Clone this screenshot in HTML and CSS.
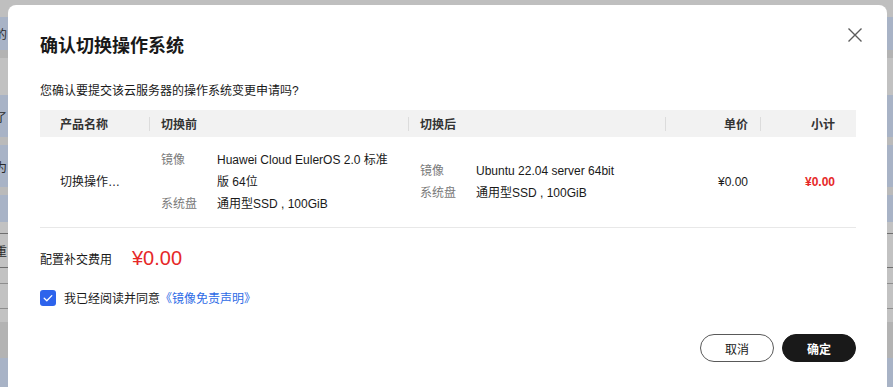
FILE: index.html
```html
<!DOCTYPE html>
<html lang="zh-CN">
<head>
<meta charset="utf-8">
<title>确认切换操作系统</title>
<link rel="stylesheet" href="styles.css">
</head>
<body>
<div class="page">
  <div class="bg r1"></div>
  <div class="bg r2 blue"><span class="bgtext">的</span></div>
  <div class="bg r3"></div>
  <div class="bg r4"></div>
  <div class="bg r5 blue"><span class="bgtext">了</span></div>
  <div class="bg r6"></div>
  <div class="bg r7 blue"><span class="bgtext">为</span></div>
  <div class="bg r8"></div>
  <div class="bg r9 blue"></div>
  <div class="bg r10"></div>
  <div class="bg r11"><span class="bgtext">重</span></div>
  <div class="bg r12"></div>
  <div class="bg r13"></div>
  <div class="bg r14"></div>
  <div class="bg r15"></div>
  <div class="bg r16 blue"></div>
</div>

<div class="dialog">
  <button class="close" aria-label="关闭">
    <svg width="16" height="16" viewBox="0 0 16 16"><path d="M1.5 1.5L14.5 14.5M14.5 1.5L1.5 14.5" stroke="#5c5c5c" stroke-width="1.4" fill="none"/></svg>
  </button>
  <h1 class="title">确认切换操作系统</h1>
  <p class="subtitle">您确认要提交该云服务器的操作系统变更申请吗?</p>

  <div class="table">
    <div class="thead">
      <div class="th c1">产品名称</div>
      <div class="th c2 sep">切换前</div>
      <div class="th c3 sep">切换后</div>
      <div class="th c4 sep right">单价</div>
      <div class="th c5 sep right">小计</div>
    </div>
    <div class="trow">
      <div class="td c1"><span class="ellipsis">切换操作系统</span></div>
      <div class="td c2">
        <dl class="spec">
          <dt>镜像</dt><dd>Huawei Cloud EulerOS 2.0 标准版 64位</dd>
          <dt>系统盘</dt><dd>通用型SSD , 100GiB</dd>
        </dl>
      </div>
      <div class="td c3">
        <dl class="spec">
          <dt>镜像</dt><dd>Ubuntu 22.04 server 64bit</dd>
          <dt>系统盘</dt><dd>通用型SSD , 100GiB</dd>
        </dl>
      </div>
      <div class="td c4 right">¥0.00</div>
      <div class="td c5 right price-red">¥0.00</div>
    </div>
  </div>

  <div class="fee">
    <span class="fee-label">配置补交费用</span>
    <span class="fee-value">¥0.00</span>
  </div>

  <label class="agree">
    <span class="checkbox">
      <svg width="16" height="16" viewBox="0 0 16 16"><rect width="16" height="16" rx="3" fill="#2d63ec"/><path d="M4.2 8.2L6.8 10.7L11.8 5.6" stroke="#fff" stroke-width="1.3" fill="none" stroke-linecap="round" stroke-linejoin="round"/></svg>
    </span>
    <span class="agree-text">我已经阅读并同意<a class="link" href="#">《镜像免责声明》</a></span>
  </label>

  <div class="actions">
    <button class="btn btn-ghost">取消</button>
    <button class="btn btn-primary">确定</button>
  </div>
</div>
</body>
</html>
```

FILE: styles.css
```css
* { box-sizing: border-box; }

html, body {
  margin: 0;
  padding: 0;
  width: 893px;
  height: 387px;
  overflow: hidden;
  background: #bdbdbd;
  font-family: "Liberation Sans", "Noto Sans CJK SC", sans-serif;
  color: #191919;
}

.page {
  display: flex;
  flex-direction: column;
}

.bg {
  background: #bfbfbf;
  font-size: 12px;
  color: #2a2a2a;
  display: flex;
  align-items: center;
  overflow: hidden;
}
.bg.blue { background: #a8b3c6; }
.bgtext { text-indent: -5px; display: block; }

.r1 { height: 17px; }
.r2 { height: 33px; }
.r3 { height: 8px; background: #b3b3b3; }
.r4 { height: 37px; background: #c1c1c1; }
.r5 { height: 42px; }
.r6 { height: 8px; background: #bababa; }
.r7 { height: 42px; }
.r8 { height: 8px; background: #bababa; }
.r9 { height: 27px; }
.r10 { height: 11px; background: #c2c2c2; }
.r11 { height: 35px; background: #c2c2c2; border-top: 1px solid #6f6f6f; border-bottom: 1px solid #6f6f6f; }
.r12 { height: 15px; background: #c2c2c2; }
.r13 { height: 26px; background: #c2c2c2; border-top: 1px solid #8e8e8e; border-bottom: 1px solid #8e8e8e; }
.r14 { height: 13px; background: #c2c2c2; }
.r15 { height: 36px; background: #b3b3b3; }
.r16 { height: 29px; }

.dialog {
  position: fixed;
  top: 5px;
  left: 8px;
  width: 879px;
  height: 382px;
  background: #fff;
  border-radius: 8px 8px 0 0;
  padding: 28px 31px 0 32px;
}

.close {
  position: absolute;
  top: 22px;
  right: 24px;
  width: 16px;
  height: 16px;
  padding: 0;
  border: 0;
  background: transparent;
  display: flex;
}

.title {
  margin: 0;
  font-size: 18px;
  line-height: 26px;
  font-weight: 700;
  color: #191919;
}

.subtitle {
  margin: 23px 0 0;
  font-size: 12px;
  line-height: 18px;
  color: #191919;
}

.table {
  margin-top: 10px;
  width: 816px;
  font-size: 12px;
}

.thead, .trow {
  display: grid;
  grid-template-columns: 109px 259px 257px 95px 96px;
}

.thead {
  background: #f2f2f2;
  height: 27px;
}

.th {
  display: flex;
  align-items: center;
  font-weight: 700;
  color: #333;
  padding: 0 12px;
  position: relative;
}
.th.sep::before {
  content: "";
  position: absolute;
  left: 0;
  top: 7px;
  height: 14px;
  width: 1px;
  background: #dcdcdc;
}
.th.c1 { padding-left: 20px; }

.right { justify-content: flex-end; text-align: right; }
.c5 { padding-right: 21px !important; }

.trow {
  height: 91px;
  border-bottom: 1px solid #e8e8e8;
  align-items: center;
}

.td {
  padding: 0 12px;
  display: flex;
  align-items: center;
  line-height: 22px;
}
.td.c1 { padding-left: 20px; }

.ellipsis {
  display: block;
  max-width: 64px;
  white-space: nowrap;
  overflow: hidden;
  text-overflow: ellipsis;
}

.spec {
  margin: 0;
  display: grid;
  grid-template-columns: 56px 1fr;
  width: 100%;
}
.spec dt { color: #7a7a7a; }
.spec dd { margin: 0; color: #191919; }

.price-red {
  color: #e62828;
  font-weight: 700;
}

.fee {
  margin-top: 16px;
  display: flex;
  align-items: center;
  height: 28px;
}
.fee-label {
  font-size: 12px;
  width: 92px;
}
.fee-value {
  font-size: 20px;
  color: #e62828;
}

.agree {
  margin-top: 17px;
  display: flex;
  align-items: center;
  font-size: 12px;
  gap: 8px;
}
.checkbox { display: flex; }
.link { color: #2e6be6; text-decoration: none; }

.actions {
  margin-top: 28px;
  display: flex;
  justify-content: flex-end;
  gap: 8px;
  width: 816px;
}

.btn {
  width: 74px;
  height: 28px;
  border-radius: 14px;
  font-family: inherit;
  font-size: 12px;
  padding: 0;
}
.btn-ghost {
  background: #fff;
  border: 1px solid #595959;
  color: #191919;
}
.btn-primary {
  background: #191919;
  border: 1px solid #191919;
  color: #fff;
  font-weight: 700;
}
```
